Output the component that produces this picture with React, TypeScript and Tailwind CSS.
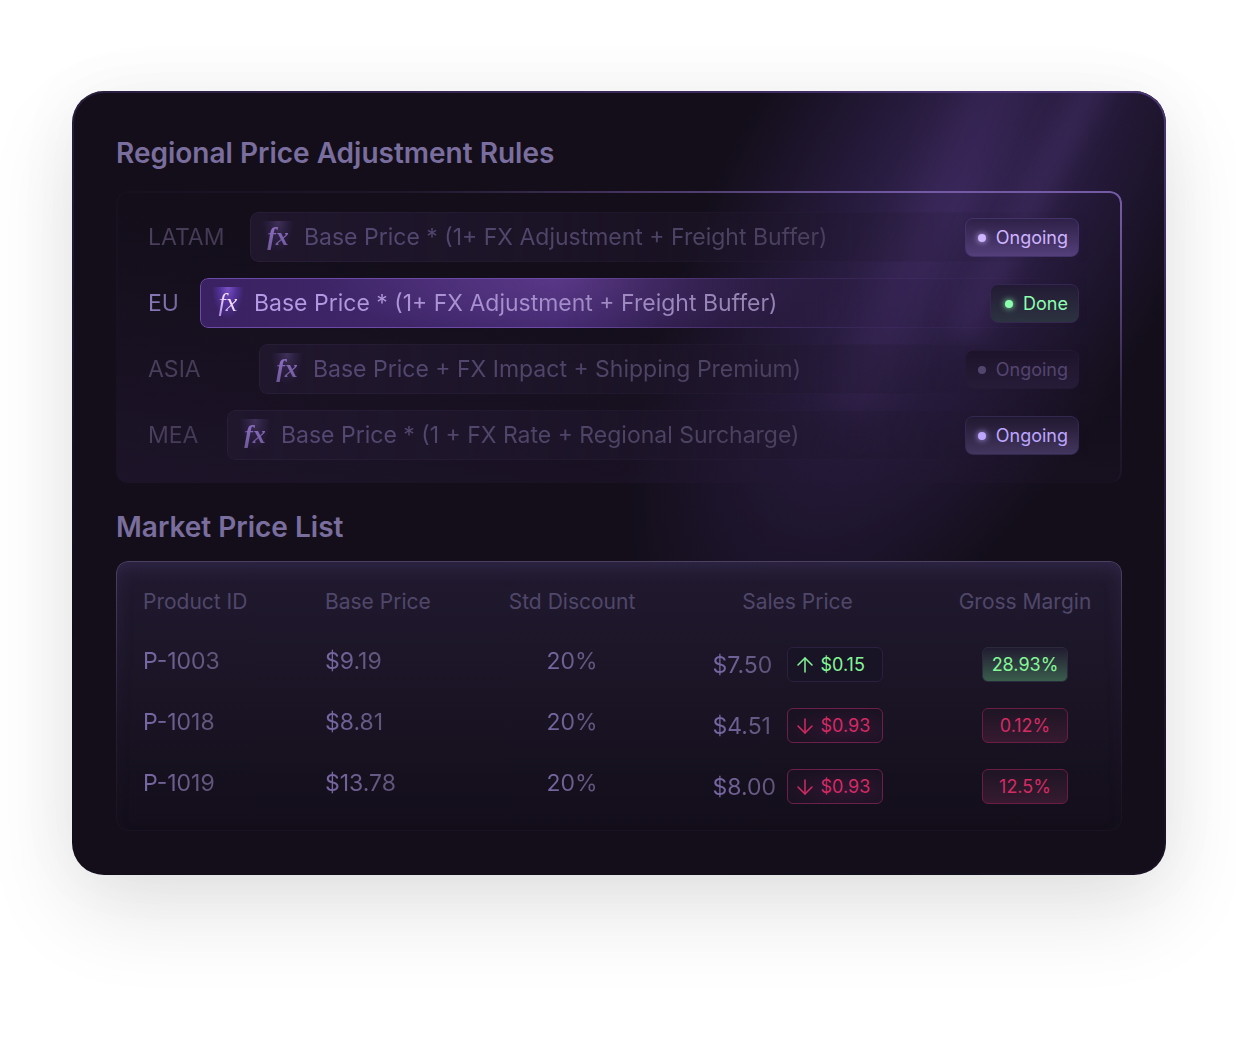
import { ArrowDown, ArrowUp } from "lucide-react";
import clsx from "clsx";

type Tone = "bright" | "done" | "faded" | "cool";

const rules: { region: string; labelWidth: string; formula: string; status: string; tone: Tone; active?: boolean }[] = [
  { region: "LATAM", labelWidth: "w-[102px]", formula: "Base Price * (1+ FX Adjustment + Freight Buffer)", status: "Ongoing", tone: "bright" },
  { region: "EU", labelWidth: "w-[52px]", formula: "Base Price * (1+ FX Adjustment + Freight Buffer)", status: "Done", tone: "done", active: true },
  { region: "ASIA", labelWidth: "w-[111px]", formula: "Base Price + FX Impact + Shipping Premium)", status: "Ongoing", tone: "faded" },
  { region: "MEA", labelWidth: "w-[79px]", formula: "Base Price * (1 + FX Rate + Regional Surcharge)", status: "Ongoing", tone: "cool" },
];

const products = [
  { id: "P-1003", base: "$9.19", discount: "20%", sales: "$7.50", delta: "$0.15", up: true, margin: "28.93%" },
  { id: "P-1018", base: "$8.81", discount: "20%", sales: "$4.51", delta: "$0.93", up: false, margin: "0.12%" },
  { id: "P-1019", base: "$13.78", discount: "20%", sales: "$8.00", delta: "$0.93", up: false, margin: "12.5%" },
];

const badgeTones: Record<Tone, string> = {
  bright: "border-[#43336a] bg-linear-to-b from-[#2e2148] to-[#543f7a] text-[#cfb4ff]",
  done: "border-[#33264f] bg-linear-to-b from-[#231a35] to-[#2c3340] text-[#8cffae]",
  faded: "border-[#241a35] bg-linear-to-b from-[#1d142b] to-[#271c38] text-[#54456f]",
  cool: "border-[#33284f] bg-linear-to-b from-[#211830] to-[#43365f] text-[#bda6ff]",
};

function StatusBadge({ status, tone }: { status: string; tone: Tone }) {
  return (
    <span
      className={clsx(
        "mr-[11px] ml-auto flex h-[39px] min-w-[89px] shrink-0 items-center justify-end rounded-lg border pt-px pr-[10px] pl-3 text-[18px] leading-6",
        badgeTones[tone],
      )}
    >
      <span className={clsx("mr-[10px] size-2 rounded-full bg-current", tone !== "faded" && "shadow-[0_0_6px_currentColor]")} />
      {status}
    </span>
  );
}

function FxIcon({ active }: { active?: boolean }) {
  return (
    <span
      className={clsx(
        "flex size-8 shrink-0 items-center justify-center",
        active
          ? "bg-[radial-gradient(ellipse_at_50%_0%,#7c52c4_0%,#53329a_35%,transparent_70%)]"
          : "bg-[radial-gradient(ellipse_at_50%_0%,#3f3058_0%,#2a1f3e_40%,transparent_70%)]",
      )}
    >
      <span
        className={clsx(
          "bg-clip-text px-1 font-['Liberation_Serif',serif] text-[26px] leading-8 text-transparent italic",
          active ? "bg-linear-to-tr from-[#9a6be0] to-[#ffe9ff] to-60%" : "bg-linear-to-b from-[#9474cc] to-[#6a5494] font-bold",
        )}
      >
        fx
      </span>
    </span>
  );
}

function RuleRow({ rule }: { rule: (typeof rules)[number] }) {
  return (
    <li className="flex h-[50px] items-center text-[23px] leading-8">
      <span
        className={clsx(
          "shrink-0 bg-linear-to-r bg-clip-text text-transparent",
          rule.labelWidth,
          rule.active ? "from-[#8b7ab8] to-[#6a5a90]" : "from-[#4a405d] to-[#40364f]",
        )}
      >
        {rule.region}
      </span>
      <div className="relative flex h-full min-w-0 flex-1 items-center pl-3">
        <div
          aria-hidden
          className={clsx(
            "absolute inset-0 rounded-lg border",
            rule.active
              ? "border-[#6d4aa5] bg-[radial-gradient(ellipse_260px_60px_at_42%_0%,#5a3888_0%,transparent_100%),linear-gradient(90deg,#3a2262,#42296f_45%,#321f4c_70%)] [mask-image:linear-gradient(90deg,#000_40%,rgba(0,0,0,0.5)_60%,rgba(0,0,0,0.15)_75%,transparent)]"
              : "border-[#281e37] bg-[#20172d] [mask-image:linear-gradient(90deg,#000,rgba(0,0,0,0.5)_50%,transparent)]",
          )}
        />
        <div className="relative flex min-w-0 flex-1 items-center">
          <FxIcon active={rule.active} />
          <span
            className={clsx(
              "ml-[10px] bg-linear-to-r bg-clip-text whitespace-nowrap text-transparent",
              rule.active ? "from-[#b79be8] to-[#9583b2]" : "from-[#554974] to-[#4a405d]",
            )}
          >
            {rule.formula}
          </span>
          <StatusBadge status={rule.status} tone={rule.tone} />
        </div>
      </div>
    </li>
  );
}

function Delta({ value, up }: { value: string; up: boolean }) {
  const Icon = up ? ArrowUp : ArrowDown;
  return (
    <span
      className={clsx(
        "flex h-[35px] w-24 items-center gap-1 rounded-md border pl-[5px] text-[18px]",
        up
          ? "border-[#2a2140] bg-[#191326] text-[#84f796]"
          : "border-[#6d1f4c] bg-[radial-gradient(ellipse_at_60%_60%,#2f1530,#1a1222_75%)] text-[#d32b63]",
      )}
    >
      <Icon size={24} strokeWidth={1.5} />
      {value}
    </span>
  );
}

function Margin({ value, up }: { value: string; up: boolean }) {
  return (
    <span
      className={clsx(
        "mx-auto flex h-[35px] w-[86px] items-center justify-center rounded-md border text-[18px]",
        up
          ? "border-[#2a2a3d] bg-linear-to-b from-[#211b30] to-[#3a5e4c] text-[#84f796]"
          : "border-[#6b1c40] bg-linear-to-b from-[#1e1524] to-[#361a30] text-[#d32b63]",
      )}
    >
      {value}
    </span>
  );
}

export default function App() {
  const cellText = "bg-linear-to-r from-[#7868a6] to-[#5f5478] bg-clip-text text-transparent";

  return (
    <main className="min-h-screen bg-white pt-[91px] pr-[70px] pb-[163px] pl-[72px] font-['Inter',sans-serif]">
      <div className="relative overflow-hidden rounded-[32px] bg-[#130e1a] px-11 py-11 shadow-[0_36px_90px_rgba(12,12,20,0.11),0_0_70px_rgba(12,12,20,0.04)]">
        <div aria-hidden className="absolute inset-0">
          <div className="absolute -top-[420px] -right-[20px] h-[1080px] w-[460px] rotate-[29deg] bg-[radial-gradient(closest-side,rgba(64,44,104,0.75),rgba(56,38,92,0.5)_45%,transparent)]" />
          <div className="absolute -top-24 right-[205px] h-[440px] w-[50px] rotate-[24deg] bg-[#54397f]/20 blur-[18px]" />
          <div className="absolute -top-24 right-[105px] h-[360px] w-[30px] rotate-[28deg] bg-[#5a3f8c]/25 blur-[12px]" />
          <div className="absolute inset-0 rounded-[32px] border-2 border-[#4a3575] [mask-image:linear-gradient(200deg,#000,rgba(0,0,0,0.3)_40%,transparent_80%)]" />
        </div>

        <div className="relative">
          <h2 className="text-[28px] leading-9 font-semibold text-[#7a6e9e]">Regional Price Adjustment Rules</h2>
          <section className="relative mt-5 rounded-xl bg-linear-[190deg,transparent_40%,rgba(36,24,52,0.55)] px-8 pt-[21px] pb-[23px]">
            <div
              aria-hidden
              className="absolute inset-0 rounded-xl border-2 border-b-0 border-[#735aa2] [mask-image:radial-gradient(ellipse_680px_270px_at_90%_0%,#000_15%,rgba(0,0,0,0.13)_90%,transparent_150%)]"
            />
            <ul className="relative flex flex-col gap-4">
              {rules.map((r) => (
                <RuleRow key={r.region} rule={r} />
              ))}
            </ul>
          </section>

          <h2 className="mt-[26px] text-[28px] leading-9 font-semibold text-[#7a6e9e]">Market Price List</h2>
          <section className="relative mt-4 rounded-xl bg-linear-to-b from-[#211a30] to-[#130e1a] pt-[25px] pr-[30px] pb-[14px] pl-[27px]">
            <div
              aria-hidden
              className="absolute inset-0 rounded-xl border border-[#4b4060] shadow-[inset_0_6px_16px_rgba(90,70,140,0.25)] [mask-image:linear-gradient(180deg,#000,rgba(0,0,0,0.25)_60%,rgba(0,0,0,0.1))]"
            />
            <table className="relative w-full table-fixed text-[23px] leading-8">
              <colgroup>
                <col className="w-[182px]" />
                <col className="w-[182px]" />
                <col className="w-[130px]" />
                <col />
                <col className="w-[134px]" />
              </colgroup>
              <thead>
                <tr className="h-[48px] text-left align-top text-[21px] whitespace-nowrap text-[#50476a]">
                  <th className="font-normal">Product ID</th>
                  <th className="font-normal">Base Price</th>
                  <th className="text-center font-normal">Std Discount</th>
                  <th className="text-center font-normal">Sales Price</th>
                  <th className="text-center font-normal">Gross Margin</th>
                </tr>
              </thead>
              <tbody>
                {products.map((p) => (
                  <tr key={p.id} className="h-[61px]">
                    <td className="pb-2"><span className={cellText}>{p.id}</span></td>
                    <td className="pb-2"><span className={cellText}>{p.base}</span></td>
                    <td className="pb-2 text-center"><span className={cellText}>{p.discount}</span></td>
                    <td>
                      <div className="flex items-center justify-center">
                        <span className="w-[74px]"><span className={cellText}>{p.sales}</span></span>
                        <Delta value={p.delta} up={p.up} />
                      </div>
                    </td>
                    <td><Margin value={p.margin} up={p.up} /></td>
                  </tr>
                ))}
              </tbody>
            </table>
          </section>
        </div>
      </div>
    </main>
  );
}
